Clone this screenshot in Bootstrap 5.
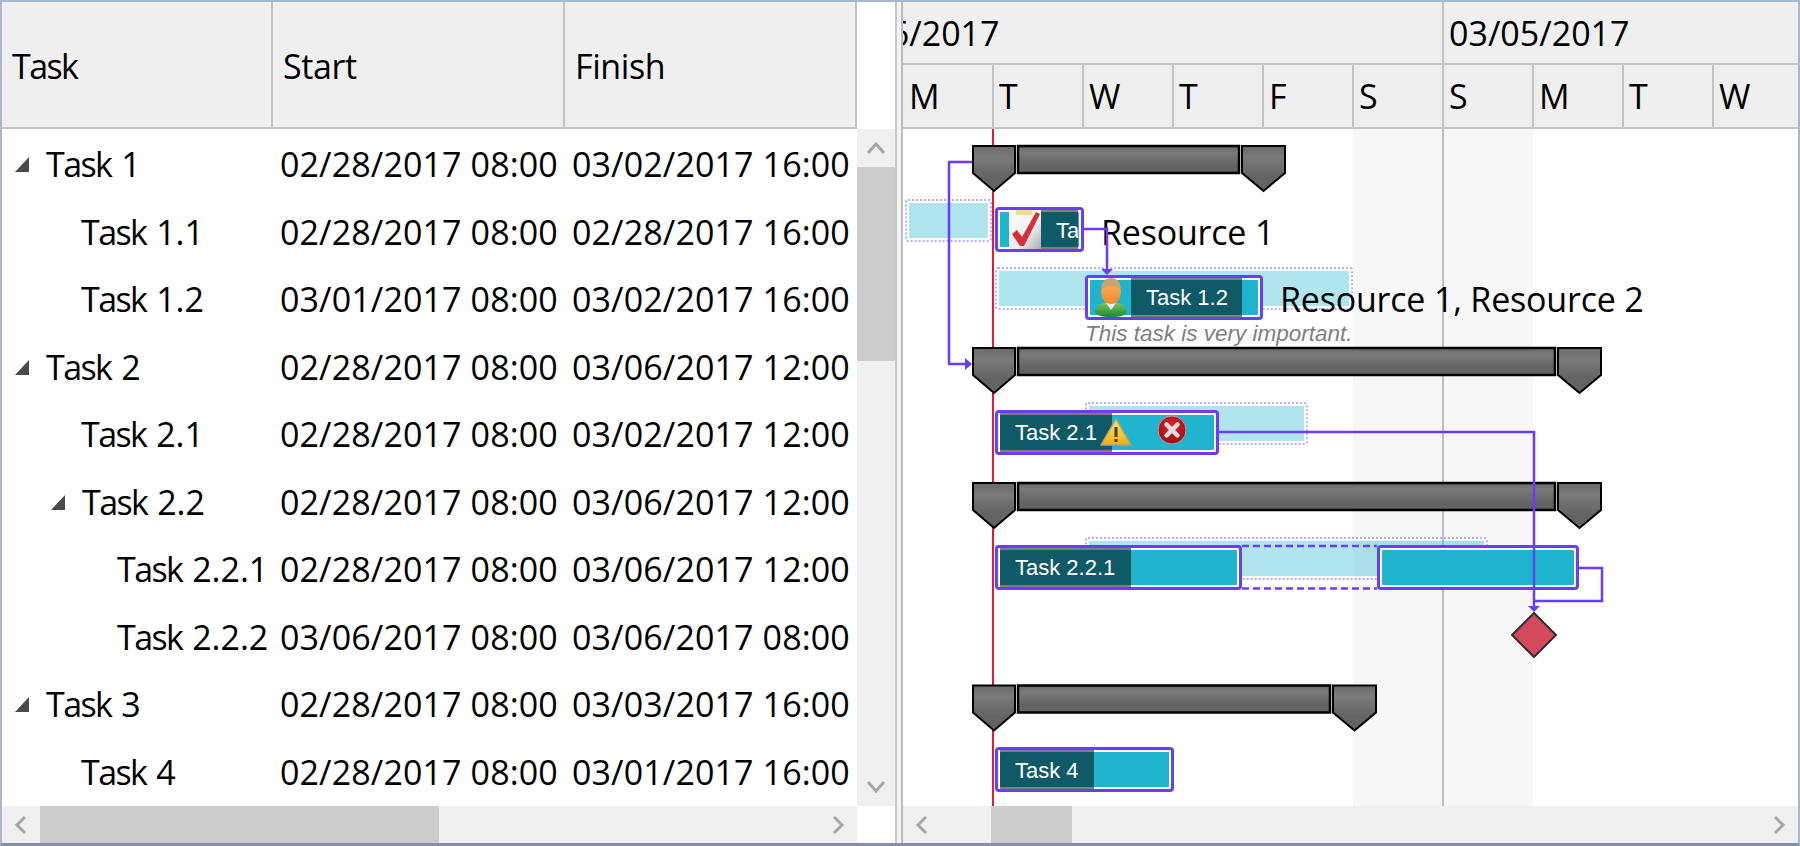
<!DOCTYPE html>
<html lang="en">
  <head>
    <meta charset="UTF-8" />
    <title>Gantt</title>
    <link rel="stylesheet" href="https://cdn.jsdelivr.net/npm/bootstrap@5.3.0/dist/css/bootstrap.min.css" />
    <style>
      body { margin: 0; overflow: hidden; background: #fff; color: #000; font-family: "Open Sans", sans-serif; font-size: 34px; line-height: 1.2; }
      .win { width: 1800px; height: 846px; border: 2px solid #a9b8c8; border-bottom: 3px solid #7f93a5; }
      .left-pane { width: 893px; }
      .grid-pane { width: 855px; }
      .split { width: 8px; border-left: 2px solid #c8c8c8; border-right: 2px solid #bdbdbd; background: #f4f4f4; }
      .right-pane { width: 895px; }
      .head { height: 127px; background: #efefef; border-bottom: 2px solid #c3c3c3; }
      .hcell { border-right: 2px solid #c3c3c3; padding: 4px 0 0 10px; letter-spacing: -0.4px; }
      .c-task { width: 271px; flex: none; }
      .c-date { width: 292px; flex: none; }
      .tk { letter-spacing: -1.6px; margin-right: 1px; }
      .trow { height: 67.5px; padding-top: 4px; }
      .tcell { white-space: nowrap; }
      .tcell.c-date { padding-left: 7px; letter-spacing: 0.12px; }
      .expander { width: 14px; height: 15px; flex: none; margin-right: 17px; }
      .lvl0 { padding-left: 13px; }
      .lvl1e { padding-left: 49px; }
      .lvl1n { padding-left: 79px; }
      .lvl2 { padding-left: 115px; }
      .rows { height: 677px; }
      .vscroll { width: 38px; padding-top: 127px; }
      .vtrack { background: #f0f0f0; height: 677px; }
      .sbtn { width: 38px; height: 38px; flex: none; background: #f0f0f0; }
      .vthumb { height: 194px; background: #cdcdcd; flex: none; }
      .hscroll { height: 37px; background: #f0f0f0; }
      .hthumb { background: #cdcdcd; height: 37px; flex: none; width: 399px; }
      .hthumb2 { background: #cdcdcd; height: 37px; flex: none; width: 81px; margin-left: 50px; }
      .corner { width: 38px; flex: none; background: #fff; }
      .hdr-top { height: 63px; border-bottom: 2px solid #c3c3c3; margin-left: -89px; }
      .wk { width: 630px; flex: none; border-right: 2px solid #c3c3c3; padding: 2px 0 0 5px; }
      .hdr-days { height: 62px; margin-left: 1px; }
      .dy { width: 90px; flex: none; border-right: 2px solid #c3c3c3; padding-left: 5px; }
      .canvas { height: 677px; }
      .wkend, .wkline, .today, .base, .gbar, .glabel, .note, .links { position: absolute; }
      .wkend { background: #f7f7f7; top: 0; bottom: 0; }
      .wkline { width: 2px; background: #bdbdbd; top: 0; bottom: 0; }
      .today { width: 2px; background: #e2183f; top: 0; bottom: 0; }
      .base { box-sizing: border-box; border: 2px dotted #bcaeff; padding: 2px; border-radius: 3px; background: rgba(32, 180, 207, 0.35); background-clip: content-box; }
      .gbar { box-sizing: border-box; border: 3px solid #6a3cff; border-radius: 4px; background: #fff; overflow: hidden; }
      .gbar-fill { position: absolute; inset: 2px; background: #20b4cf; border-radius: 1px; }
      .gbar-row { position: relative; height: 100%; padding: 0 2px; }
      .gbar-icon { width: 41px; flex: none; }
      .gbar-prog { flex: none; height: 100%; background: rgba(0, 0, 0, 0.5); padding: 3px 0 0 15px; color: #fff; font-family: "Liberation Sans", sans-serif; font-size: 22px; white-space: nowrap; overflow: hidden; }
      .glabel { white-space: nowrap; letter-spacing: -0.2px; }
      .note { font-family: "Liberation Sans", sans-serif; font-style: italic; font-size: 22.5px; color: #808080; white-space: nowrap; }
      .links { left: 0; top: 0; pointer-events: none; }
    </style>
  </head>

  <body>
    <div class="win d-flex overflow-hidden">
      <!-- Task grid -->
      <div class="left-pane d-flex flex-column flex-none">
        <div class="d-flex">
          <div class="grid-pane">
            <div class="head d-flex">
              <div class="hcell c-task d-flex align-items-center"><span class="tk">Task</span></div>
              <div class="hcell c-date d-flex align-items-center">Start</div>
              <div class="hcell c-date d-flex align-items-center">Finish</div>
            </div>
            <div class="rows overflow-hidden" id="rows"></div>
          </div>
          <div class="vscroll">
            <div class="vtrack d-flex flex-column">
              <div class="sbtn d-flex align-items-center justify-content-center">
                <svg width="20" height="14"><polyline points="2,12 10,3 18,12" fill="none" stroke="#a6a6a6" stroke-width="3" /></svg>
              </div>
              <div class="vthumb"></div>
              <div class="flex-grow-1"></div>
              <div class="sbtn d-flex align-items-center justify-content-center">
                <svg width="20" height="14"><polyline points="2,2 10,11 18,2" fill="none" stroke="#a6a6a6" stroke-width="3" /></svg>
              </div>
            </div>
          </div>
        </div>
        <div class="d-flex">
          <div class="hscroll grid-pane d-flex">
            <div class="sbtn d-flex align-items-center justify-content-center">
              <svg width="14" height="20"><polyline points="11,2 3,10 11,18" fill="none" stroke="#a6a6a6" stroke-width="3" /></svg>
            </div>
            <div class="hthumb"></div>
            <div class="flex-grow-1"></div>
            <div class="sbtn d-flex align-items-center justify-content-center">
              <svg width="14" height="20"><polyline points="3,2 11,10 3,18" fill="none" stroke="#a6a6a6" stroke-width="3" /></svg>
            </div>
          </div>
          <div class="corner"></div>
        </div>
      </div>

      <div class="split"></div>

      <!-- Timeline -->
      <div class="right-pane d-flex flex-column overflow-hidden">
        <div class="head overflow-hidden">
          <div class="hdr-top d-flex">
            <div class="wk d-flex align-items-center">02/26/2017</div>
            <div class="wk d-flex align-items-center">03/05/2017</div>
          </div>
          <div class="hdr-days d-flex" id="days"></div>
        </div>
        <div class="canvas position-relative overflow-hidden" id="canvas"></div>
        <div class="hscroll d-flex">
          <div class="sbtn d-flex align-items-center justify-content-center">
            <svg width="14" height="20"><polyline points="11,2 3,10 11,18" fill="none" stroke="#a6a6a6" stroke-width="3" /></svg>
          </div>
          <div class="hthumb2"></div>
          <div class="flex-grow-1"></div>
          <div class="sbtn d-flex align-items-center justify-content-center">
            <svg width="14" height="20"><polyline points="3,2 11,10 3,18" fill="none" stroke="#a6a6a6" stroke-width="3" /></svg>
          </div>
        </div>
      </div>
    </div>

    <script src="https://cdn.jsdelivr.net/npm/bootstrap@5.3.0/dist/js/bootstrap.bundle.min.js"></script>
    <script>
      const tasks = [
        ["1", "02/28/2017 08:00", "03/02/2017 16:00", "lvl0", true],
        ["1.1", "02/28/2017 08:00", "02/28/2017 16:00", "lvl1n", false],
        ["1.2", "03/01/2017 08:00", "03/02/2017 16:00", "lvl1n", false],
        ["2", "02/28/2017 08:00", "03/06/2017 12:00", "lvl0", true],
        ["2.1", "02/28/2017 08:00", "03/02/2017 12:00", "lvl1n", false],
        ["2.2", "02/28/2017 08:00", "03/06/2017 12:00", "lvl1e", true],
        ["2.2.1", "02/28/2017 08:00", "03/06/2017 12:00", "lvl2", false],
        ["2.2.2", "03/06/2017 08:00", "03/06/2017 08:00", "lvl2", false],
        ["3", "02/28/2017 08:00", "03/03/2017 16:00", "lvl0", true],
        ["4", "02/28/2017 08:00", "03/01/2017 16:00", "lvl1n", false],
      ];
      const expander =
        '<svg class="expander" viewBox="0 0 14 15"><polygon points="14,0 14,15 0,15" fill="#4a4a4a"/></svg>';

      document.getElementById("rows").innerHTML = tasks
        .map(
          (t) => `
          <div class="trow d-flex align-items-center">
            <div class="tcell c-task d-flex align-items-center ${t[3]}">${t[4] ? expander : ""}<span><span class="tk">Task</span> ${t[0]}</span></div>
            <div class="tcell c-date">${t[1]}</div>
            <div class="tcell c-date">${t[2]}</div>
          </div>`
        )
        .join("");

      document.getElementById("days").innerHTML = ["M", "T", "W", "T", "F", "S", "S", "M", "T", "W"]
        .map((d) => `<div class="dy d-flex align-items-center">${d}</div>`)
        .join("");

      // Chart items use screen coordinates, the canvas starts at 903,129
      const OX = 903;
      const OY = 129;
      const canvas = document.getElementById("canvas");

      function place(el, x, y, w, h) {
        el.style.left = x - OX + "px";
        if (y !== null) el.style.top = y - OY + "px";
        if (w) el.style.width = w + "px";
        if (h) el.style.height = h + "px";
        canvas.appendChild(el);
        return el;
      }
      function make(cls, html) {
        const el = document.createElement("div");
        el.className = cls;
        if (html) el.innerHTML = html;
        return el;
      }

      place(make("wkend"), 1353, null, 180);
      place(make("wkline"), 1442, null);
      place(make("today"), 992, null);

      // Baselines
      [
        [905, 199, 87],
        [995, 266.5, 358],
        [1085, 401.5, 223],
        [1085, 536.5, 403],
      ].forEach((b) => place(make("base"), b[0], b[1], b[2], 43));

      const clipboardIcon = `<svg width="32" height="41" viewBox="0 0 32 41" class="d-block">
        <defs><linearGradient id="paper" x1="0" y1="0" x2="1" y2="1"><stop offset="0" stop-color="#fff"/><stop offset="0.6" stop-color="#eee"/><stop offset="1" stop-color="#a9a9a9"/></linearGradient></defs>
        <rect x="0" y="2" width="32" height="39" rx="2" fill="url(#paper)"/>
        <rect x="7" y="0" width="16" height="6" fill="#efdc90"/>
        <path d="M3 25 L8 21 L13 28 L27 3 L31 5 L15 37 L11 37 Z" fill="#d8303a"/>
      </svg>`;
      const personIcon = `<svg width="32" height="39" viewBox="0 0 32 39" class="d-block me-1">
        <defs>
          <linearGradient id="skin" x1="0" y1="0" x2="0" y2="1"><stop offset="0" stop-color="#ffb25c"/><stop offset="1" stop-color="#f08a2c"/></linearGradient>
          <linearGradient id="shirt" x1="0" y1="0" x2="0" y2="1"><stop offset="0" stop-color="#7cc46a"/><stop offset="1" stop-color="#1f8a2c"/></linearGradient>
        </defs>
        <path d="M0 33 Q3 25 12 24 L20 24 Q29 25 32 33 Q32 39 16 39 Q0 39 0 33Z" fill="url(#shirt)"/>
        <path d="M11 25 L21 25 L16 32Z" fill="#eef3ee"/>
        <ellipse cx="16" cy="14" rx="10" ry="12" fill="url(#skin)"/>
        <path d="M6 11 Q7 0 16 0 Q25 0 26 11 Q16 5 6 11Z" fill="#c9a36a"/>
      </svg>`;
      const warnIcon = `<svg width="32" height="28" viewBox="0 0 32 28" class="d-block">
        <defs><linearGradient id="warn" x1="0" y1="0" x2="0" y2="1"><stop offset="0" stop-color="#fde36a"/><stop offset="1" stop-color="#eeb00e"/></linearGradient></defs>
        <polygon points="16,1 31,27 1,27" fill="url(#warn)" stroke="#b5a46a" stroke-width="1.5" stroke-linejoin="round"/>
        <rect x="14.5" y="9" width="3" height="10" fill="#4a3a10"/><rect x="14.5" y="21" width="3" height="3" fill="#4a3a10"/>
      </svg>`;
      const errIcon = `<svg width="30" height="30" viewBox="0 0 30 30" class="d-block">
        <defs><radialGradient id="errg" cx="0.5" cy="0.35" r="0.7"><stop offset="0" stop-color="#e2232c"/><stop offset="1" stop-color="#8f0c12"/></radialGradient></defs>
        <circle cx="15" cy="15" r="14" fill="url(#errg)" stroke="#b9a3a3"/>
        <path d="M9.5 9.5 L20.5 20.5 M20.5 9.5 L9.5 20.5" stroke="#e8dede" stroke-width="4.5" stroke-linecap="round"/>
      </svg>`;

      function taskBar(o) {
        const icon = o.icon
          ? `<div class="gbar-icon d-flex align-items-center justify-content-end">${o.icon}</div>`
          : "";
        const prog = o.prog
          ? `<div class="gbar-prog d-flex align-items-center" style="width:${o.prog}px">${o.text}</div>`
          : "";
        const bar = make(
          "gbar",
          `<div class="gbar-fill"></div><div class="gbar-row d-flex">${icon}${prog}</div>`
        );
        return place(bar, o.x, o.y, o.w, 45);
      }
      taskBar({ x: 995, y: 207, w: 89, prog: 37, text: "Task 1.1", icon: clipboardIcon });
      taskBar({ x: 1085, y: 274.5, w: 178, prog: 111, text: "Task 1.2", icon: personIcon });
      taskBar({ x: 995, y: 409.5, w: 224, prog: 112, text: "Task 2.1" });
      taskBar({ x: 995, y: 544.5, w: 247, prog: 131, text: "Task 2.2.1" });
      taskBar({ x: 1377, y: 544.5, w: 202 });
      taskBar({ x: 995, y: 747, w: 179, prog: 94, text: "Task 4" });

      place(make("glabel", warnIcon), 1100, 418);
      place(make("glabel", errIcon), 1157, 415);
      place(make("glabel", "Resource 1"), 1101, 211.5);
      place(make("glabel", "Resource 1, Resource 2"), 1280, 278.5);
      place(make("note", "This task is very important."), 1085, 319.5);

      // Summaries, milestone and dependency lines
      function summary(x1, x2, top) {
        const b = top + 27;
        const tip = top + 45;
        const lp = `${x1},${top} ${x1 + 42},${top} ${x1 + 42},${b} ${x1 + 21},${tip} ${x1},${b}`;
        const rx = x2 - 44;
        const rp = `${rx},${top} ${rx + 43},${top} ${rx + 43},${b} ${rx + 21.5},${tip} ${rx},${b}`;
        return `
          <rect x="${x1 + 45}" y="${top}" width="${rx - x1 - 48}" height="27" fill="url(#sumbar)" stroke="#000" stroke-width="2.5"/>
          <polygon points="${lp}" fill="url(#sumbar)" stroke="#000" stroke-width="2"/>
          <polygon points="${rp}" fill="url(#sumbar)" stroke="#000" stroke-width="2"/>`;
      }
      const links = `
        <svg class="links" width="895" height="677" viewBox="${OX} ${OY} 895 677">
          <defs>
            <linearGradient id="sumbar" x1="0" y1="0" x2="0" y2="1">
              <stop offset="0" stop-color="#6a6a6a"/><stop offset="0.25" stop-color="#7a7a7a"/><stop offset="0.7" stop-color="#636363"/><stop offset="1" stop-color="#636363"/>
            </linearGradient>
          </defs>
          ${summary(973, 1286, 146)}
          ${summary(973, 1602, 348)}
          ${summary(973, 1602, 483)}
          ${summary(973, 1377, 685.5)}
          <polygon points="1534,613 1556,635 1534,657 1512,635" fill="#d5495f" stroke="#2f2f2f" stroke-width="2"/>
          <g fill="none" stroke="#6a3cff" stroke-width="2.5">
            <polyline points="972,162 949,162 949,364 966,364"/>
            <polyline points="1084,229 1107,229 1107,270"/>
            <polyline points="1219,432 1534,432 1534,607"/>
            <polyline points="1579,568 1602,568 1602,601 1534,601"/>
            <path d="M1242 546 H1377 M1242 588.5 H1377" stroke-dasharray="7 4"/>
          </g>
          <g fill="#6a3cff">
            <polygon points="965,358 972,364 965,370"/>
            <polygon points="1101,269 1113,269 1107,275"/>
            <polygon points="1528,606 1540,606 1534,612"/>
          </g>
        </svg>`;
      canvas.insertAdjacentHTML("beforeend", links);
    </script>
  </body>
</html>
